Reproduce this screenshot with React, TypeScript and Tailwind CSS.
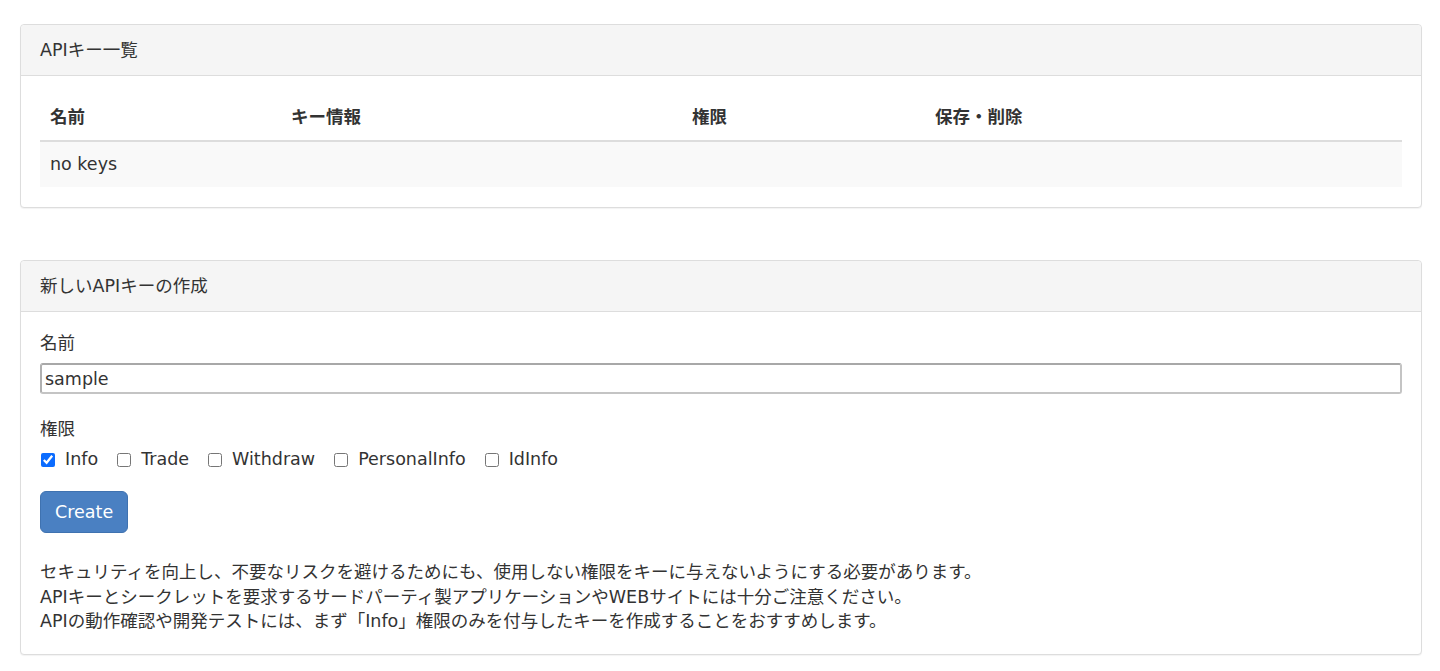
import { useState } from 'react';

const font = { fontFamily: '"DejaVu Sans", "Noto Sans CJK JP", sans-serif' };

function Panel({ title, children }: { title: string; children: React.ReactNode }) {
  return (
    <div className="border border-[#dddddd] rounded-[4px] bg-white shadow-[0_1px_1px_rgba(0,0,0,0.05)]">
      <div className="h-[51px] flex items-center px-[19px] bg-[#f5f5f5] border-b border-[#dddddd] rounded-t-[4px]">
        {title}
      </div>
      <div className="px-[19px] pt-[19px] pb-[20px]">{children}</div>
    </div>
  );
}

export default function App() {
  const [perms, setPerms] = useState<string[]>(['Info']);
  const [name, setName] = useState('sample');
  const options = ['Info', 'Trade', 'Withdraw', 'PersonalInfo', 'IdInfo'];

  const toggle = (p: string) => {
    setPerms(perms.includes(p) ? perms.filter((x) => x !== p) : [...perms, p]);
  };

  return (
    <div className="min-h-screen bg-white text-[#333333] text-[17.5px] leading-[25px] pt-[24px] pl-[20px] pr-[18px]" style={font}>
      {/* API key list */}
      <Panel title="APIキー一覧">
        <table className="w-full border-collapse">
          <thead>
            <tr className="border-b-2 border-[#dddddd] text-left">
              <th className="w-[241px] px-[10px] py-[10px] font-bold">名前</th>
              <th className="w-[401px] px-[10px] py-[10px] font-bold">キー情報</th>
              <th className="w-[243px] px-[10px] py-[10px] font-bold">権限</th>
              <th className="px-[10px] py-[10px] font-bold">保存・削除</th>
            </tr>
          </thead>
          <tbody>
            <tr className="bg-[#f9f9f9]">
              <td colSpan={4} className="px-[10px] py-[10px]">no keys</td>
            </tr>
          </tbody>
        </table>
      </Panel>

      <div className="h-[52px]" />

      {/* Create new key */}
      <Panel title="新しいAPIキーの作成">
        <div className="mb-[7px]">名前</div>
        <input
          value={name}
          onChange={(e) => setName(e.target.value)}
          className="block w-full h-[31px] px-[3px] border-2 border-[#c4c4c4] border-t-[#a8a8a8] border-l-[#b0b0b0] rounded-[3px] outline-none"
        />
        <div className="mt-[23px] mb-[5px]">権限</div>
        <div className="flex items-center gap-[18px]">
          {options.map((p) => (
            <label key={p} className="flex items-center gap-[10px] cursor-pointer">
              <input
                type="checkbox"
                checked={perms.includes(p)}
                onChange={() => toggle(p)}
                className="w-[14px] h-[14px] ml-[1px] accent-[#0b6cff]"
              />
              <span>{p}</span>
            </label>
          ))}
        </div>
        <button className="mt-[19px] h-[42px] px-[14px] rounded-[6px] bg-[#4a80c2] border border-[#3f72b0] text-white">
          Create
        </button>
        <div className="mt-[27px] leading-[24.5px]">
          <p>セキュリティを向上し、不要なリスクを避けるためにも、使用しない権限をキーに与えないようにする必要があります。</p>
          <p>APIキーとシークレットを要求するサードパーティ製アプリケーションやWEBサイトには十分ご注意ください。</p>
          <p>APIの動作確認や開発テストには、まず「Info」権限のみを付与したキーを作成することをおすすめします。</p>
        </div>
      </Panel>
    </div>
  );
}
